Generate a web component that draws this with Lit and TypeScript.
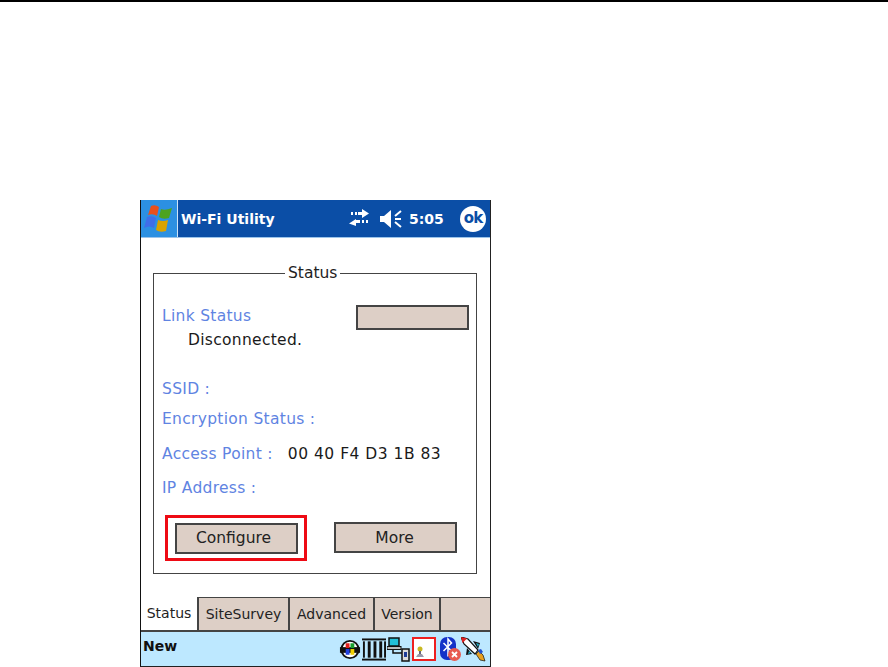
import { LitElement, html, css, svg } from "lit";
import { customElement } from "lit/decorators.js";

@customElement("app-root")
export class AppRoot extends LitElement {
  static styles = css`
    :host { display: block; width: 888px; height: 667px; background: #fff; overflow: hidden; font-family: "DejaVu Sans", "Noto Sans", sans-serif; }
    .page { height: 667px; box-sizing: border-box; border-top: 2px solid #000; padding: 198px 0 0 140px; }
    .device { width: 351px; height: 467px; box-sizing: border-box; border-left: 1px solid #111; border-right: 1px solid #222; border-bottom: 1px solid #222; display: flex; flex-direction: column; background: #fff; }
    .title { height: 38px; flex: none; display: flex; align-items: center; background: #0b4ea6; border-bottom: 1px solid #9cc4ea; box-sizing: border-box; color: #fff; font-weight: 700; font-size: 14px; }
    .start { width: 36px; height: 37px; background: #2c90e2; border-right: 1px solid #cfe4f7; display: flex; align-items: center; justify-content: center; flex: none; }
    .app { margin-left: 3px; flex: 1; white-space: nowrap; }
    .tray { display: flex; align-items: center; }
    .arrows { margin-right: 9px; }
    .speaker { margin-right: 6px; }
    .clock { width: 51px; font-size: 14px; }
    .ok { width: 26px; height: 26px; border-radius: 50%; background: #fff; color: #0b4ea6; font-size: 15px; font-weight: 700; display: flex; align-items: center; justify-content: center; margin: 0 4px 0 0; letter-spacing: -1px; line-height: 1; }
    .content { flex: none; height: 359px; padding: 35px 13px 0 12px; box-sizing: border-box; }
    .group { position: relative; height: 301px; box-sizing: border-box; border: 1.5px solid #444; padding: 31px 7px 0 8px; font-size: 15.5px; letter-spacing: 0.3px; line-height: 22px; color: #1a1a1a; }
    .legend { position: absolute; top: -12px; left: 131px; background: #fff; padding: 0 3px; color: #222; letter-spacing: 0; }
    .label { color: #5f84e2; }
    .top { display: flex; justify-content: space-between; align-items: flex-start; height: 24px; }
    .led { width: 113px; height: 25px; box-sizing: border-box; border: 2px solid #444; background: #ddcfc6; }
    .value { padding-left: 26px; height: 22px; }
    .row { display: flex; height: 22px; white-space: nowrap; }
    .row.ssid { margin-top: 27px; }
    .row.enc { margin-top: 8px; }
    .row.ap { margin-top: 13px; }
    .row.ip { margin-top: 12px; }
    .ap .addr { margin-left: 15px; letter-spacing: 0.5px; }
    .buttons { display: flex; justify-content: space-between; align-items: center; margin: 16px 12px 0 3px; height: 45px; }
    .focus { border: 3px solid #ee0a14; padding: 5px 6px 4px 7px; display: flex; }
    .btn { width: 123px; height: 31px; box-sizing: border-box; border: 2px solid #444; background: #ddcfc6; display: flex; align-items: center; justify-content: center; color: #222; letter-spacing: 0; }
    .btn.cfg { padding-right: 6px; }
    .btn.more { padding-right: 2px; }
    .tabs { height: 33px; flex: none; display: flex; font-size: 14px; color: #222; background: #ddcfc6; border-top: 1.5px solid #444; box-sizing: border-box; }
    .tab { display: flex; align-items: center; justify-content: center; box-sizing: border-box; border-right: 2px solid #444; white-space: nowrap; }
    .tab.active { background: #fff; margin-top: -1.5px; }
    .bar { flex: 1; min-height: 0; background: #bde8ff; border-top: 2px solid #444; display: flex; align-items: center; justify-content: space-between; padding: 0 4px 0 2px; }
    .new { font-weight: 700; font-size: 14px; color: #111; margin-top: -6px; }
    .icons { display: flex; align-items: center; }
    .barcode { margin-left: 1px; }
    .network { margin-left: 1px; }
    .signal { margin-left: 2px; }
    .bt { margin-left: 4px; }
    .rocket { margin-left: -1px; }
    svg { display: block; flex: none; }
  `;

  private windowsLogo() {
    return html`<svg width="32" height="30" viewBox="0 0 32 30">
      <path d="M8 2 Q12 0 16 3 L14 12 Q10 9 5 11 Z" fill="#e8501c"/>
      <path d="M18 5 Q22 7 29 4 L26 14 Q20 16 16 13 Z" fill="#4da320"/>
      <path d="M4 13 Q9 11 13 14 L11 24 Q6 21 1 24 Z" fill="#3f6ee8"/>
      <path d="M15 16 Q20 18 25 16 L23 27 Q17 29 13 26 Z" fill="#d9a300"/>
    </svg>`;
  }

  private arrows() {
    return html`<svg class="arrows" width="22" height="20" viewBox="0 0 22 20" fill="#fff">
      <path d="M7 3h2v3H7zM3 3h2v3H3zM10 3h4V0l7 4.500-7 4.500V6h-4z"/>
      <path d="M8 11h4v3H8v3L1 14.500 8 10zM14 11h2v3h-2zM18 11h2v3h-2z"/>
    </svg>`;
  }

  private speaker() {
    return html`<svg class="speaker" width="24" height="20" viewBox="0 0 24 20">
      <path d="M1 7h4l7-6v18l-7-6H1z" fill="#fff"/>
      <path d="M22 2l-6 5M16 10h6M16 13l6 5" stroke="#fff" stroke-width="2" fill="none"/>
    </svg>`;
  }

  private globe() {
    return svg`<svg width="22" height="23" viewBox="0 0 23 23">
      <circle cx="11.500" cy="11.500" r="9" fill="#fff" stroke="#111" stroke-width="2"/>
      <path d="M1 9h21v6H1z" fill="#111"/>
      <rect x="7" y="5" width="4" height="5" fill="#e02020"/><rect x="12" y="5" width="4" height="5" fill="#1aa030"/>
      <rect x="7" y="11" width="4" height="6" fill="#2040e0"/><rect x="12" y="11" width="4" height="6" fill="#f0d000"/>
    </svg>`;
  }

  private barcode() {
    return svg`<svg class="barcode" width="24" height="25" viewBox="0 0 25 25" fill="#111">
      <rect x="0" y="1" width="25" height="2"/><rect x="0" y="22" width="25" height="2"/>
      <rect x="1" y="4" width="2" height="17"/><rect x="6" y="4" width="3" height="17"/><rect x="12" y="4" width="3" height="17"/><rect x="18" y="4" width="3" height="17"/><rect x="23" y="4" width="2" height="17"/>
    </svg>`;
  }

  private network() {
    return svg`<svg class="network" width="23" height="25" viewBox="0 0 23 25">
      <rect x="2" y="1" width="10" height="8" fill="#22c0d8" stroke="#111" stroke-width="1.500"/>
      <rect x="0" y="9.500" width="14" height="3" fill="#bbb" stroke="#111"/>
      <path d="M6 13v3h9" stroke="#111" stroke-width="1.500" fill="none"/>
      <rect x="15" y="12" width="7" height="12" fill="#ddd" stroke="#111" stroke-width="1.500"/>
      <rect x="17" y="15" width="3" height="5" fill="#1f3d99"/>
    </svg>`;
  }

  private signal() {
    return svg`<svg class="signal" width="24" height="24" viewBox="0 0 24 24">
      <rect x="1" y="1" width="22" height="22" fill="#fff" stroke="#ee2020" stroke-width="2"/>
      <circle cx="8" cy="12" r="2.500" fill="#c8b820"/>
      <path d="M8 14v3" stroke="#667" stroke-width="2"/><path d="M4 20h8l-2-3H6z" fill="#99a"/>
    </svg>`;
  }

  private bluetooth() {
    return svg`<svg class="bt" width="22" height="26" viewBox="0 0 22 26">
      <rect x="0" y="1" width="16" height="23" rx="7" fill="#1432c8"/>
      <path d="M3.500 7l8 8-3.500 4V3l3.500 4-8 8" stroke="#fff" stroke-width="1.500" fill="none"/>
      <circle cx="14.500" cy="18.500" r="6.500" fill="#e85a50"/>
      <path d="M12 16l5 5M17 16l-5 5" stroke="#fff" stroke-width="1.800"/>
    </svg>`;
  }

  private rocket() {
    return svg`<svg class="rocket" width="25" height="25" viewBox="0 0 25 25">
      <path d="M0 0l7 2 10 11-3 4L3 7z" fill="#fff" stroke="#111" stroke-width="1.200"/>
      <path d="M0 0l6 1.500L1.500 6z" fill="#e02020"/>
      <path d="M6 11l-1 7 6-1zM12 4l7 2-2 6z" fill="#111"/>
      <path d="M8 14l-1 3 3-1zM15 6l3 1-1 3z" fill="#20b0c8"/>
      <path d="M15 17l4 6 5 1-2-6-4-4z" fill="#e8a020" stroke="#111" stroke-width=".7"/>
      <path d="M17 13l3-1 2 3-3 2z" fill="#2050d0"/>
    </svg>`;
  }

  render() {
    return html`<div class="page">
      <div class="device">
        <div class="title">
          <div class="start">${this.windowsLogo()}</div>
          <div class="app">Wi-Fi Utility</div>
          <div class="tray">${this.arrows()}${this.speaker()}<span class="clock">5:05</span><span class="ok">ok</span></div>
        </div>
        <div class="content">
          <div class="group">
            <span class="legend">Status</span>
            <div class="top"><span class="label">Link Status</span><div class="led"></div></div>
            <div class="value">Disconnected.</div>
            <div class="row ssid"><span class="label">SSID :</span></div>
            <div class="row enc"><span class="label">Encryption Status :</span></div>
            <div class="row ap"><span class="label">Access Point :</span><span class="addr">00 40 F4 D3 1B 83</span></div>
            <div class="row ip"><span class="label">IP Address :</span></div>
            <div class="buttons">
              <div class="focus"><div class="btn cfg">Configure</div></div>
              <div class="btn more">More</div>
            </div>
          </div>
        </div>
        <div class="tabs">
          <div class="tab active" style="width:58px">Status</div>
          <div class="tab" style="width:91px">SiteSurvey</div>
          <div class="tab" style="width:85px">Advanced</div>
          <div class="tab" style="width:66px">Version</div>
        </div>
        <div class="bar">
          <span class="new">New</span>
          <div class="icons">${this.globe()}${this.barcode()}${this.network()}${this.signal()}${this.bluetooth()}${this.rocket()}</div>
        </div>
      </div>
    </div>`;
  }
}
